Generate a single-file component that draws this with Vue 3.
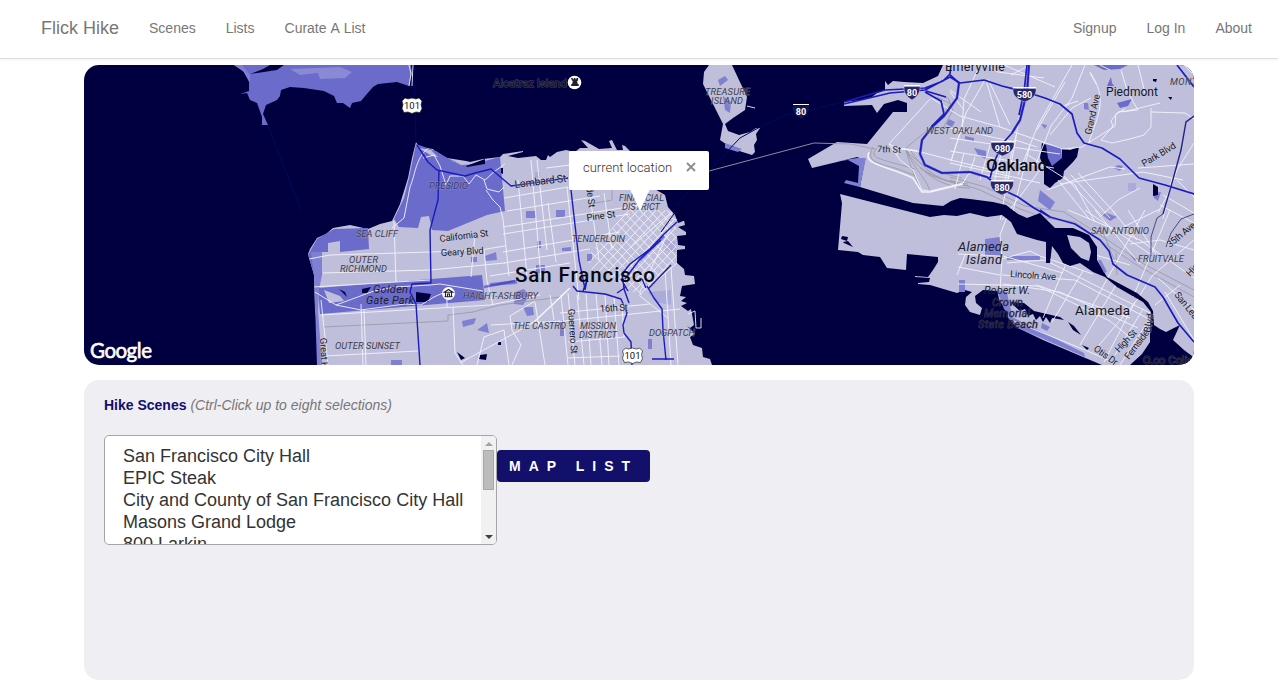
<script setup>
const leftLinks = ['Scenes', 'Lists', 'Curate A List']
const rightLinks = ['Signup', 'Log In', 'About']
const scenes = [
  'San Francisco City Hall',
  'EPIC Steak',
  'City and County of San Francisco City Hall',
  'Masons Grand Lodge',
  '800 Larkin',
]

const land = [
  // San Francisco
  'M416 142L419 147 433 149 438 154 447 158 456 162 470 162 483 159 500 157 503 154 523 151 523 152 508 156 518 158 536 156 541 160 546 160 548 155 550 157 557 152 566 150 575 152 580 148 588 148 581 140 585 141 599 149 612 148 609 141 612 140 617 150 623 150 622 145 625 146 630 151 650 160 653 188 665 195 668 207 675 215 678 223 684 221 685 225 678 227 686 232 686 235 677 236 678 245 685 246 685 249 677 250 677 263 684 269 685 275 694 276 695 284 682 286 680 296 686 297 681 301 687 303 681 306 688 311 691 309 692 314 694 325 690 328 687 326 695 334 690 337 693 345 702 348 703 357 710 359 712 365 322 365 318 330 315 310 314 275 308 254 310 249 317 238 326 234 333 228 350 225 368 229 380 224 392 221 400 204 408 178 412 158Z',
  // Treasure Island and Yerba Buena
  'M709 65L704 72 703 84 715 108 723 124 720 140 733 149 752 155 755 152 754 145 757 140 756 134 760 128 756 128 750 132 739 135 728 131 725 124 733 118 745 110 747 97 739 80 732 65Z',
  // East Bay mainland
  'M943 65L938 76 923 83 904 82 893 81 888 85 885 81 885 90 877 93 872 97 861 100 844 102 844 106 872 105 877 113 884 104 898 100 907 103 907 112 893 112 867 144 837 142 808 159 812 168 837 162 857 157 865 160 860 187 913 203 943 206 951 201 960 198 970 199 993 202 1006 205 1018 214 1027 218 1040 213 1049 222 1055 228 1073 228 1089 235 1097 247 1097 260 1107 277 1137 293 1148 302 1153 311 1154 325 1160 329 1166 332 1180 325 1173 340 1184 350 1192 356 1194 365 1194 65Z',
  // Alameda
  'M840 194L930 217 944 215 957 216 970 213 987 217 1002 215 1011 222 1017 234 1027 237 1037 240 1046 242 1046 263 1050 263 1052 246 1058 254 1063 263 1070 266 1080 263 1093 272 1105 277 1117 287 1143 302 1151 312 1150 325 1150 342 1142 354 1130 365 1102 365 1083 357 1043 340 1018 328 1008 317 1008 309 1000 302 997 291 983 290 975 296 976 303 982 308 980 315 970 312 965 305 966 297 972 292 965 290 957 293 930 285 918 284 918 283 929 282 930 278 915 277 915 276 928 277 933 270 938 262 938 257 907 254 906 270 887 268 880 257 863 255 858 252 838 250 842 203Z',
  'M1067 235L1080 237 1089 243 1091 252 1089 261 1081 258 1071 248Z',
]

const parks = [
  'M234 65L270 65 263 69 250 74 277 70 284 65 411 65 412 73 409 86 397 82 378 84 373 87 366 95 361 101 352 103 350 108 343 103 337 103 334 96 324 91 304 88 290 87 281 90 280 96 277 100 266 105 263 114 268 125 262 125 262 117 257 103 250 100 247 93 240 94 249 91 249 82 244 72Z',
  'M416 144L436 151 454 162 473 164 500 157 505 211 487 215 448 231 432 230 429 216 421 217 418 228 399 227 394 219 404 198 409 178Z',
  'M308 255L317 239 334 229 368 228 369 249 340 252 340 241 328 243 328 252 322 252 322 274 314 274Z',
  'M318 288L482 275 485 300 320 314Z',
  'M1045 144L1061 148 1062 159 1052 166 1043 156Z',
  'M1094 65L1128 65 1120 69 1104 70Z',
  'M1117 103L1132 99 1128 106 1120 108Z',
  'M1111 77L1112 83 1114 86 1107 86Z',
]

const tints = [
  'M314 275L317 365 322 365 318 310 319 290 322 275 322 252 311 252Z',
  'M234 65L242 65 250 75 250 82 243 71Z',
  'M857 158L866 158 860 187 844 183 846 180 858 183 859 166 848 160 838 161Z',
  'M985 239L1000 237 1001 256 985 256Z',
  'M1007 256L1040 256 1040 260 1007 260Z',
  'M959 280L965 280 965 292 959 292Z',
  'M997 290L1007 292 1012 317 1004 309Z',
  'M526 211H536V218H526Z',
  'M556 210H565V217H556Z',
  'M537 241H541V248H537Z',
  'M536 265H545V273H536Z',
  'M587 254H592V261H587Z',
  'M562 248L571 247 571 251 562 251Z',
  'M515 292L524 289 529 296 523 305 514 304Z',
  'M523 307L533 307 534 315 527 316Z',
  'M560 320H564V336H560Z',
  'M648 339H652V349H648Z',
  'M485 256L496 252 497 260 486 261Z',
  'M490 283L517 280 517 284 490 286Z',
  'M471 257H477V262H471Z',
  'M462 321L476 318 474 324 463 327Z',
  'M477 330L487 323 489 333Z',
  'M391 360H402V365H391Z',
  'M949 119L955 122 952 127 946 124Z',
  'M965 136L974 138 974 141 965 139Z',
  'M974 148L986 151 987 160 978 155Z',
  'M1041 124L1047 125 1045 129Z',
  'M1084 103L1088 103 1089 110 1084 109Z',
  'M1040 190L1055 202 1050 210 1038 201Z',
  'M1101 214L1107 213 1117 217 1110 221Z',
  'M1118 165L1123 166 1120 171 1113 168Z',
  'M1153 193L1161 192 1158 201 1154 198Z',
  'M1098 260L1101 260 1107 272 1104 273Z',
  'M1130 255L1138 259 1135 261Z',
  'M1042 323L1050 327 1047 331 1041 328Z',
  'M1010 306L1012 317 1084 353 1085 357 1018 328 1008 318Z',
  'M718 80L725 76 728 80 720 86Z',
  'M723 96L731 102 730 113 725 110Z',
  'M725 143L742 149 738 152 725 148Z',
]

const paleTints = [
  'M1128 183H1136V191H1128Z',
  'M648 292L671 290 671 305 655 302Z',
  'M663 240L675 241 676 252 666 250Z',
  'M535 172H540V178H535Z',
  'M290 69L340 67 352 72 345 78 320 79 318 73 300 75Z',
]

const ponds = [
  'M1042 143L1046 145 1048 158 1052 166 1062 158 1062 149 1070 150 1079 147 1077 157 1073 162 1064 171 1063 178 1055 183 1050 188 1044 184 1044 168 1040 158Z',
  'M339 289L345 292 347 297Z',
  'M362 289L371 287 367 293 362 293Z',
  'M416 292L431 294 428 302 416 302Z',
  'M457 352L465 358 461 360Z',
  'M480 355L487 354 486 360 479 359Z',
  'M498 342L501 342 501 345 498 345Z',
  'M501 168L503 168 503 174 501 173Z',
  'M466 166L485 159 485 164 467 167Z',
  'M842 236L848 237 847 241 841 239Z',
  'M843 242L848 241 853 247 844 243Z',
  'M1153 184L1158 187 1158 195 1153 196Z',
  'M1153 79L1157 79 1156 82 1153 81Z',
  'M1168 97L1172 97 1171 100Z',
  'M1010 302L1024 303 1034 311 1060 317 1064 320 1052 318 1050 323 1046 317 1043 322 1040 316 1036 320 1033 314 1028 316 1025 309 1020 311Z',
  'M1068 322L1074 326 1081 335 1073 330Z',
  'M1082 345L1089 348 1087 350Z',
]

const rails = [
  'M709 171L814 143 850 144 875 149',
  'M873 147C865 162 878 163 898 169L916 176M877 148C867 158 880 159 915 169',
  'M906 150C910 165 915 180 922 190M906 150C913 168 928 180 930 192M906 150C918 172 938 178 958 184M906 150C920 166 935 172 962 178M910 149C921 169 940 182 968 186M906 148L930 128 951 104 937 97',
  'M932 93L948 98 953 110 942 130',
  'M950 180L980 190 1020 209 1045 218 1075 222 1105 244 1140 267 1194 297M950 177L985 187 1025 206 1064 212 1100 235 1144 264 1194 290',
  'M323 327L448 321 448 315 473 312 500 305 560 297',
  'M1116 253L1117 275M1100 225L1116 264',
  'M920 168C935 180 955 183 968 184M925 172C940 184 955 188 970 188M590 204L612 200 612 190',
]

const streets = [
  'M431 146C415 157 416 173 410 187L404 218 392 228M423 158L434 155 440 166 446 185 450 176 463 176 469 184 476 175 485 180 495 171 505 164M484 180L487 189 499 192 504 187M486 190L493 200 500 207 503 219',
  'M309 259L330 255 430 252 480 250 505 246M323 273L430 270 505 263M312 287L430 280M394 221L396 282M475 235L471 277M315 292L336 305 361 310 405 304 421 305 434 297 445 292M336 305L374 291 395 287 430 285 440 284 483 291',
  'M321 315L440 308 490 305 540 295M324 356L418 351M321 300L328 365M361 304L363 365M364 309L366 365M447 292L447 307M453 307L455 353 463 365M477 365L484 337 504 330 509 365M493 305L487 281 484 250M512 365L521 345 512 330 510 316 535 301',
  'M504 198L568 187M507 211L600 196M503 227L640 205M503 234L630 214M503 252L620 232M490 276L570 263M504 263L590 249M503 219L509 276M518 180L527 276M531 160L541 278M537 160L547 250M546 168L570 165M567 187L579 300M590 195L599 260M548 203L556 262M604 193L612 250',
  'M570 288L533 323 460 363M561 295L568 365M568 293L575 365M577 295L584 365M586 294L591 365M596 294L602 365M605 295L609 365M614 296L619 365M535 302L545 365M550 295L554 320M535 324L680 309M560 313L650 304M568 342L625 337M568 358L620 356M491 325L562 321M622 304L624 337',
  'M673 211L632 246M671 227L640 292M677 263L647 289M671 268L678 365M665 269L671 365M640 296L668 318M670 218L685 222',
]

const eastStreets = [
  'M930 99L889 144 897 148 917 151 955 161 1005 173M889 144L900 160 913 170 922 190 930 191 963 183 969 173 1010 178M897 148L897 155M931 98L960 116 1000 127 1063 149 1082 147 1115 126 1116 114 1125 109M980 65L964 99 962 128 951 161M950 90L981 112M986 80L1000 127M988 79L1010 125M985 80L966 113 951 161M998 72L987 65M998 72L1044 78M1004 65L1055 87M1011 75L1030 65M1072 65L1038 125 1018 175M1065 82L1037 130M1085 65L1072 98 1051 126 1035 166M1090 72C1108 100 1099 112 1088 145M1090 73L1096 84M1063 106L1078 101M1050 135L1072 108 1091 98',
  'M1100 65L1110 70M1121 70L1128 93 1138 110 1118 112 1111 121 1113 126 1101 140 1112 143 1130 139 1144 135 1151 127 1151 108M1151 112L1185 113 1194 119M1123 112L1160 103M1138 65L1145 93',
  'M950 92L964 110M950 138L1060 154M950 151L1054 168M950 163L1040 183M964 153L955 189M975 157L969 175M990 145L980 180M1003 145L994 183M1016 135L1005 180M1030 145L1012 215M1040 170L1002 220M1015 140L1037 147M950 128L1015 142M1020 112L1015 144 1000 220',
  'M1028 155L1075 185 1095 222M1064 176L1102 216M1071 175L1110 218M1078 173L1116 214M1058 180L1090 220M1060 184L1143 172 1183 180M1047 190L1110 167 1125 169M1100 217L1118 200 1140 188M1138 168L1194 164M1172 178L1163 219M1177 180L1194 197M1163 195L1194 213M1160 205L1194 223M1184 65L1194 75M1194 143L1177 170 1170 190 1158 213',
  'M1068 210L1140 240 1194 278M1085 210L1150 254M1095 210L1140 264M1112 210L1137 240M1128 210L1156 254M1145 210L1116 263 1090 310M1105 236L1160 209M1130 244L1160 240 1194 250M1170 210L1133 297M1194 240L1152 276 1137 300 1095 350M1194 310L1158 278M1165 292L1194 340M1155 305L1180 285M1092 254L1130 265',
  'M1007 217L1000 235 1002 259 1000 290M958 254L1000 256M958 267L1000 275M965 255L957 275M958 284L1040 286 1130 318M1002 259L1030 251 1040 256 1093 274M1007 263L1045 260 1150 313M1002 275L1075 280 1147 318M1003 284L1060 292 1138 328M1036 285L1110 321 1132 339M1065 266L1043 318M1083 271L1052 322M1116 285L1080 345M1135 302L1104 362M1143 309L1115 355M1150 318L1120 365M1011 320L1085 350 1108 360M1003 256L1063 273',
]

const faintHighways = [
  'M661 232L676 211M676 205L740 138 760 127 785 115 844 102',
  'M416 143L414 70M268 126L301 210',
]

const highways = [
  'M417 145L428 162 437 170 465 176 475 173 491 169 511 186 568 178',
  'M439 170L438 200 430 230 431 283 412 284 410 292 416 304 420 365',
  'M571 190L579 260 585 289',
  'M573 286L577 291 605 294 621 299 627 313 623 325 624 333 631 342 632 365',
  'M629 303L624 289 622 274 630 264 650 249 664 234 677 222M625 279L640 259 661 240M617 293L626 287M628 291L621 279M585 290L587 280 583 291',
  'M647 286L654 298 662 309 663 330 665 350 666 360M642 279L646 288M652 359L674 359',
]

const eastHighways = [
  'M844 102L885 90 925 88 943 81 950 74 951 65M844 104L890 93 925 90 950 77 960 83 984 80 1002 86 1026 92 1045 98 1060 104 1072 114 1077 133 1084 143 1102 148 1120 159 1139 178 1165 185 1194 194',
  'M950 75L959 83 957 98 944 116 933 126 922 140 920 154 925 165 942 173 970 172 987 177 1001 189 1018 197 1034 208 1050 217',
  'M925 92L941 101 944 114 931 127M926 91L946 97',
  'M1029 65L1027 92 1020 120 1012 133 1003 143 995 160 990 178M1027 65L1024 92 1019 115',
  'M1040 210L1050 217 1075 224 1100 240 1109 251 1113 264 1127 275 1155 287 1163 297 1178 323 1194 342',
  'M1177 65L1194 87',
]

const darkRoads = [
  'M648 289L671 265',
  'M1194 116L1186 122 1181 150 1172 183 1163 214',
]
const thinRoads = [
  'M1163 214L1157 218 1151 237 1151 256',
  'M1194 214L1181 219 1171 233 1166 247',
]

// x and y give the start of the baseline, w the drawn width, r the rotation
const labels = [
  { t: 'Alcatraz Island', x: 493, y: 87, w: 74, s: 11.5, c: 'dim' },
  { t: 'TREASURE', x: 705, y: 95, w: 45, s: 9.3, c: 'area' },
  { t: 'ISLAND', x: 711, y: 104, w: 32, s: 9.3, c: 'area' },
  { t: 'PRESIDIO', x: 429, y: 189, w: 39, s: 9.3, c: 'area faded' },
  { t: 'SEA CLIFF', x: 356, y: 237, w: 42, s: 9.3, c: 'area' },
  { t: 'OUTER', x: 349, y: 263, w: 29, s: 9.3, c: 'area' },
  { t: 'RICHMOND', x: 340, y: 272, w: 47, s: 9.3, c: 'area' },
  { t: 'Golden', x: 373, y: 293, w: 35, s: 11, c: 'park' },
  { t: 'Gate Park', x: 366, y: 304, w: 48, s: 11, c: 'park' },
  { t: 'HAIGHT-ASHBURY', x: 463, y: 299, w: 75, s: 9.3, c: 'area' },
  { t: 'OUTER SUNSET', x: 335, y: 349, w: 65, s: 9.3, c: 'area' },
  { t: 'Lombard St', x: 515, y: 188, w: 52, s: 10.5, c: 'road', r: -7 },
  { t: 'California St', x: 440, y: 242, w: 49, s: 9.5, c: 'road', r: -7 },
  { t: 'Geary Blvd', x: 441, y: 256, w: 43, s: 9.5, c: 'road', r: -3 },
  { t: 'Pine St', x: 587, y: 221, w: 29, s: 9.5, c: 'road', r: -8 },
  { t: 'Hyde St', x: 585, y: 177, w: 31, s: 9.5, c: 'road', r: 83 },
  { t: 'FINANCIAL', x: 619, y: 201, w: 45, s: 9.3, c: 'area' },
  { t: 'DISTRICT', x: 622, y: 210, w: 38, s: 9.3, c: 'area' },
  { t: 'TENDERLOIN', x: 572, y: 242, w: 53, s: 9.3, c: 'area' },
  { t: 'San Francisco', x: 515, y: 282, w: 140, s: 20.5, c: 'city' },
  { t: '16th St', x: 600, y: 312, w: 28, s: 9.5, c: 'road', r: -3 },
  { t: 'THE CASTRO', x: 513, y: 329, w: 53, s: 9.3, c: 'area' },
  { t: 'MISSION', x: 580, y: 329, w: 36, s: 9.3, c: 'area' },
  { t: 'DISTRICT', x: 579, y: 338, w: 38, s: 9.3, c: 'area' },
  { t: 'DOGPATCH', x: 649, y: 336, w: 46, s: 9.3, c: 'area' },
  { t: 'Guerrero St', x: 568, y: 309, w: 45, s: 9.5, c: 'road', r: 86 },
  { t: 'Great Hwy', x: 320, y: 338, w: 42, s: 9.5, c: 'road', r: 87 },
  { t: 'Emeryville', x: 945, y: 71, w: 60, s: 12.5, c: 'town' },
  { t: 'Piedmont', x: 1106, y: 96, w: 52, s: 12, c: 'town' },
  { t: 'Oakland', x: 986, y: 171, w: 61, s: 17, c: 'city' },
  { t: 'Alameda', x: 1075, y: 315, w: 55, s: 13.5, c: 'town' },
  { t: 'MONTCLAIR', x: 1170, y: 85, w: 54, s: 9.3, c: 'area' },
  { t: 'WEST OAKLAND', x: 926, y: 134, w: 67, s: 9.3, c: 'area' },
  { t: '7th St', x: 877, y: 152, w: 24, s: 9, c: 'road', r: 2 },
  { t: 'Grand Ave', x: 1091, y: 135, w: 41, s: 9.5, c: 'road', r: -77 },
  { t: 'Park Blvd', x: 1144, y: 167, w: 38, s: 9.5, c: 'road', r: -31 },
  { t: 'SAN ANTONIO', x: 1091, y: 234, w: 58, s: 9.3, c: 'area' },
  { t: 'FRUITVALE', x: 1138, y: 262, w: 46, s: 9.3, c: 'area' },
  { t: '35th Ave', x: 1170, y: 248, w: 34, s: 9.5, c: 'road', r: -40 },
  { t: 'High St', x: 1190, y: 277, w: 29, s: 9.5, c: 'road', r: -47 },
  { t: 'San Leandro St', x: 1174, y: 295, w: 60, s: 9.5, c: 'road', r: 51 },
  { t: 'High St', x: 1119, y: 353, w: 27, s: 9.5, c: 'road', r: -47 },
  { t: 'Fernside', x: 1129, y: 360, w: 34, s: 9.5, c: 'road', r: -53 },
  { t: 'Blvd', x: 1150, y: 333, w: 19, s: 9.5, c: 'road', r: -79 },
  { t: 'Otis Dr', x: 1093, y: 350, w: 27, s: 9.5, c: 'road', r: 36 },
  { t: 'Lincoln Ave', x: 1010, y: 277, w: 46, s: 9.5, c: 'road', r: 4 },
  { t: 'Alameda', x: 958, y: 251, w: 51, s: 13, c: 'park' },
  { t: 'Island', x: 966, y: 264, w: 36, s: 13, c: 'park' },
  { t: 'Robert W.', x: 984, y: 294, w: 46, s: 11, c: 'park' },
  { t: 'Crown', x: 992, y: 306, w: 31, s: 11, c: 'park dark' },
  { t: 'Memorial', x: 984, y: 317, w: 46, s: 11, c: 'park dark' },
  { t: 'State Beach', x: 978, y: 328, w: 60, s: 11, c: 'park dark' },
  { t: 'O.co Coliseum', x: 1143, y: 364, w: 72, s: 11, c: 'dim' },
]

const interstates = [
  { n: '80', x: 801, y: 110, w: 16, bare: true },
  { n: '80', x: 912, y: 91, w: 16 },
  { n: '580', x: 1024.5, y: 93, w: 23 },
  { n: '980', x: 1002.5, y: 147, w: 23 },
  { n: '880', x: 1002, y: 186, w: 23 },
]
const usRoutes = [
  { n: '101', x: 412, y: 105.5 },
  { n: '101', x: 632.5, y: 355.5 },
]

const shieldPath = (w) => {
  const h = w / 2
  return `M${-h} -4.5H${h}C${h + 0.5} 2 ${h - 3} 6 0 9C${3 - h} 6 ${-h - 0.5} 2 ${-h} -4.5Z`
}
const diagonals = Array.from({ length: 18 }, (_, i) => i * 9)
</script>

<template>
  <header class="navbar">
    <nav class="group">
      <a class="brand">Flick Hike</a>
      <a v-for="link in leftLinks" :key="link">{{ link }}</a>
    </nav>
    <nav class="group">
      <a v-for="link in rightLinks" :key="link">{{ link }}</a>
    </nav>
  </header>

  <main class="container">
    <section class="map">
      <svg class="canvas" viewBox="84 65 1110 300" width="1110" height="300">
        <defs>
          <clipPath id="soma">
            <path d="M671 211L676 225 676 262 640 296 589 268 588 256 632 205Z" />
          </clipPath>
          <clipPath id="soil"><path :d="land.join('')" /></clipPath>
        </defs>
        <path v-for="(d, i) in land" :key="'l' + i" :d="d" class="land" />
        <path v-for="(d, i) in parks" :key="'p' + i" :d="d" class="green" />
        <path v-for="(d, i) in tints" :key="'t' + i" :d="d" class="tint" />
        <path v-for="(d, i) in paleTints" :key="'q' + i" :d="d" class="pale" />
        <path d="M418 148L431 150 438 157 432 156 424 151ZM447 158L454 161 461 165 480 164 466 161Z" class="land" />
        <path d="M324 290L340 296 344 301 329 303Z" class="land" />
        <path v-for="(d, i) in ponds" :key="'w' + i" :d="d" class="water" />
        <g clip-path="url(#soil)">
          <path v-for="(d, i) in rails.slice(1)" :key="'r' + i" :d="d" class="rail" />
          <path v-for="(d, i) in streets" :key="'s' + i" :d="d" class="street" />
          <path v-for="(d, i) in eastStreets" :key="'e' + i" :d="d" class="street" />
        </g>
        <path :d="rails[0]" class="rail" />
        <g clip-path="url(#soma)" class="street">
          <path v-for="n in diagonals" :key="'a' + n" :d="`M${545 + n} 300l90 -96`" />
          <path v-for="n in diagonals" :key="'b' + n" :d="`M${540 + n} 200l98 100`" />
        </g>
        <path d="M570 288L533 323" class="street wide" />
        <path d="M897 148L917 151M869 152C863 165 885 165 913 178L922 192 930 192 963 184" class="street wide" />
        <path d="M409 65L411 74 409 86M413 65L412 86M747 106L755 108" class="street" />
        <path d="M688 314L695 311 696 328 701 328 701 318" class="street" />
        <path v-for="(d, i) in faintHighways" :key="'x' + i" :d="d" class="faint-highway" />
        <path v-for="(d, i) in darkRoads" :key="'d' + i" :d="d" class="dark-road" />
        <path v-for="(d, i) in thinRoads" :key="'k' + i" :d="d" class="dark-road thin" />
        <path v-for="(d, i) in highways" :key="'h' + i" :d="d" class="highway" />
        <path v-for="(d, i) in eastHighways" :key="'g' + i" :d="d" class="highway east" />
        <path d="M1029 65L1027 92 1020 120 1012 133M920 154L925 165 942 173 970 172 987 177M959 83L957 98 944 116 933 126 922 140 920 154M640 260L664 236M484 287L515 281" class="highway double" />

        <text
          v-for="(l, i) in labels"
          :key="'n' + i"
          :class="l.c"
          :font-size="l.s"
          :textLength="l.w"
          :transform="`translate(${l.x} ${l.y}) rotate(${l.r || 0})`"
        >{{ l.t }}</text>

        <g v-for="(s, i) in interstates" :key="'i' + i" :transform="`translate(${s.x} ${s.y})`">
          <path :d="shieldPath(s.w)" class="shield" :class="{ bare: s.bare }" />
          <path :d="`M${-s.w / 2} -5.5H${s.w / 2}`" class="shield-bar" />
          <text y="4.5" class="shield-text">{{ s.n }}</text>
        </g>
        <g v-for="(s, i) in usRoutes" :key="'u' + i" :transform="`translate(${s.x} ${s.y})`">
          <path d="M-7 -7.5L-4 -6.5 0 -7.5 4 -6.5 7 -7.5 10 -4.5 9 -1 10 3 8 7 4 6.500 0 8 -4 6.5 -8 7 -10 3 -9 -1 -10 -4.5Z" class="us-shield" />
          <text y="3.8" class="us-text">{{ s.n }}</text>
        </g>

        <g transform="translate(574.5 82.5)">
          <circle r="6.8" class="pin" />
          <path d="M-3.5 -4.5h1.800v1.2h1v-1.2h1.6v1.2h1v-1.2h1.700v2.800h-1l.6 3.300h1v2h-7.500v-2h1l.6 -3.300h-.8z" class="pin-glyph" />
        </g>
        <g transform="translate(448.5 293.5)">
          <circle r="6.5" class="pin" />
          <path d="M-4.300 -1.300L0 -4 4.300 -1.300ZM-3 -1v4M3 -1v4M-4 3.300H4M-1 3V.500h2V3" class="museum" />
        </g>

        <text x="90" y="358" class="logo" textLength="62">Google</text>
      </svg>

      <div class="bubble">
        <span>current location</span>
        <svg class="close" viewBox="0 0 10 10" width="10" height="10">
          <path d="M1 1L9 9M9 1L1 9" />
        </svg>
      </div>
    </section>

    <section class="panel">
      <h2><strong>Hike Scenes</strong> <em>(Ctrl-Click up to eight selections)</em></h2>
      <form class="row">
        <div class="listbox">
          <ul>
            <li v-for="scene in scenes" :key="scene">{{ scene }}</li>
          </ul>
          <div class="scrollbar">
            <i class="arrow up"></i>
            <i class="thumb"></i>
            <i class="arrow down"></i>
          </div>
        </div>
        <button type="button">MAP LIST</button>
      </form>
    </section>
  </main>
</template>

<style>
body {
  background: #fff;
  overflow: hidden;
}
</style>

<style scoped>
.navbar {
  box-sizing: border-box;
  height: 59px;
  padding: 0 26px 2px 41px;
  border-bottom: 1px solid #ddd;
  box-shadow: 0 1px 3px rgba(0, 0, 0, 0.06);
  display: flex;
  align-items: center;
  justify-content: space-between;
  font: 14px/20px "Liberation Sans", Arial, sans-serif;
  font-kerning: none;
  color: #777;
}
.group {
  display: flex;
  align-items: center;
  gap: 30px;
}
.brand {
  font-size: 18px;
}
.container {
  width: 1110px;
  margin: 6px auto 0;
  font-family: "Liberation Sans", Arial, sans-serif;
}
.map {
  position: relative;
  height: 300px;
  border-radius: 15px;
  overflow: hidden;
  background: #000040;
}
.canvas {
  display: block;
  font-family: Roboto, sans-serif;
}
.land { fill: #bfbfdb; }
.green { fill: #6b6bcb; }
.tint { fill: #8080d2; }
.pale { fill: #9d9dda; fill-opacity: 0.6; }
.water { fill: #000040; }
.street { fill: none; stroke: #f3f3fc; stroke-width: 0.9; stroke-linejoin: round; }
.wide { stroke-width: 1.6; }
.rail { fill: none; stroke: #9c9ca6; stroke-width: 0.9; }
.highway { fill: none; stroke: #1b1bbf; stroke-width: 1.4; stroke-linejoin: round; }
.east { stroke-width: 1.7; }
.double { stroke-width: 2.6; stroke-opacity: 0.5; }
.faint-highway { fill: none; stroke: #06065c; stroke-width: 1; }
.dark-road { fill: none; stroke: #22228b; stroke-width: 1.4; }
.thin { stroke: #3c3c70; stroke-width: 0.9; }
.area { font-style: italic; fill: #3c3c48; stroke: #c9c9e2; stroke-width: 1; stroke-opacity: 0.35; paint-order: stroke; }
.faded { fill: #34346a; }
.road { fill: #20202a; stroke: #c9c9e2; stroke-width: 1.5; stroke-opacity: 0.5; paint-order: stroke; }
.park { font-style: italic; fill: #20202c; }
.dark { stroke: #52527e; stroke-width: 0.8; stroke-opacity: 0.6; paint-order: stroke; }
.town { fill: #16161e; }
.city { fill: #08080e; font-weight: 500; }
.dim { fill: #0a0a26; stroke: #46465e; stroke-width: 1; paint-order: stroke; }
.shield { fill: #27276a; stroke: #dcdcf2; stroke-width: 0.5; }
.bare { fill: #14144e; stroke: none; }
.shield-bar { stroke: #fff; stroke-width: 1.2; }
.shield-text { fill: #fff; font-size: 9px; font-weight: 700; text-anchor: middle; }
.us-shield { fill: #fff; stroke: #24242c; stroke-width: 0.7; }
.us-text { fill: #111; font-size: 9.5px; text-anchor: middle; }
.pin { fill: #fff; }
.pin-glyph { fill: #22222c; }
.museum { fill: none; stroke: #22222c; stroke-width: 1.1; }
.logo { fill: #fff; stroke: #fff; stroke-width: 0.6; font-family: Lato, sans-serif; font-size: 20.5px; }
.bubble {
  position: absolute;
  left: 485px;
  top: 86px;
  box-sizing: border-box;
  width: 140px;
  height: 39px;
  padding: 0 13px 5px 14px;
  display: flex;
  align-items: center;
  justify-content: space-between;
  border-radius: 2px;
  background: #fff;
  color: #333;
  font: 300 13px/18px Roboto, sans-serif;
}
.bubble::after {
  content: "";
  position: absolute;
  left: 61px;
  top: 38px;
  border: solid transparent;
  border-width: 22px 10px 0;
  border-top-color: #fff;
}
.close {
  margin-bottom: 2px;
  fill: none;
  stroke: #8c8c8c;
  stroke-width: 1.8;
}
.panel {
  box-sizing: border-box;
  height: 300px;
  margin-top: 15px;
  padding: 15px 20px;
  border-radius: 15px;
  background: #efeef3;
}
h2 {
  margin: 0 0 20px;
  font-size: 14px;
  line-height: 20px;
  font-weight: 400;
  color: #777;
}
h2 strong {
  color: #12106b;
}
.row {
  display: flex;
  align-items: flex-start;
}
.listbox {
  box-sizing: border-box;
  width: 393px;
  height: 110px;
  display: flex;
  overflow: hidden;
  border: 1px solid #a5a5a5;
  border-radius: 5px;
  background: #fff;
}
ul {
  flex: 1;
  margin: 0;
  padding: 9px 0 0 18px;
  list-style: none;
  font-size: 18px;
  line-height: 22px;
  color: #333;
  white-space: nowrap;
}
.scrollbar {
  width: 15px;
  display: flex;
  flex-direction: column;
  align-items: center;
  background: #f1f1f1;
}
.arrow {
  width: 0;
  height: 0;
  border: 4px solid transparent;
}
.up {
  margin-top: 6px;
  border-top: 0;
  border-bottom-color: #a3a3a3;
}
.down {
  margin: auto 0 5px;
  border-bottom: 0;
  border-top-color: #404040;
}
.thumb {
  box-sizing: border-box;
  width: 11px;
  height: 40px;
  margin-top: 4px;
  border: 1px solid #a8a8a8;
  background: #bcbcbc;
}
button {
  height: 32px;
  margin-top: 15px;
  padding: 0 12px;
  border: 0;
  border-radius: 4px;
  background: #12106b;
  color: #fff;
  font: bold 14px/20px "Liberation Sans", Arial, sans-serif;
  letter-spacing: 8px;
}
</style>
